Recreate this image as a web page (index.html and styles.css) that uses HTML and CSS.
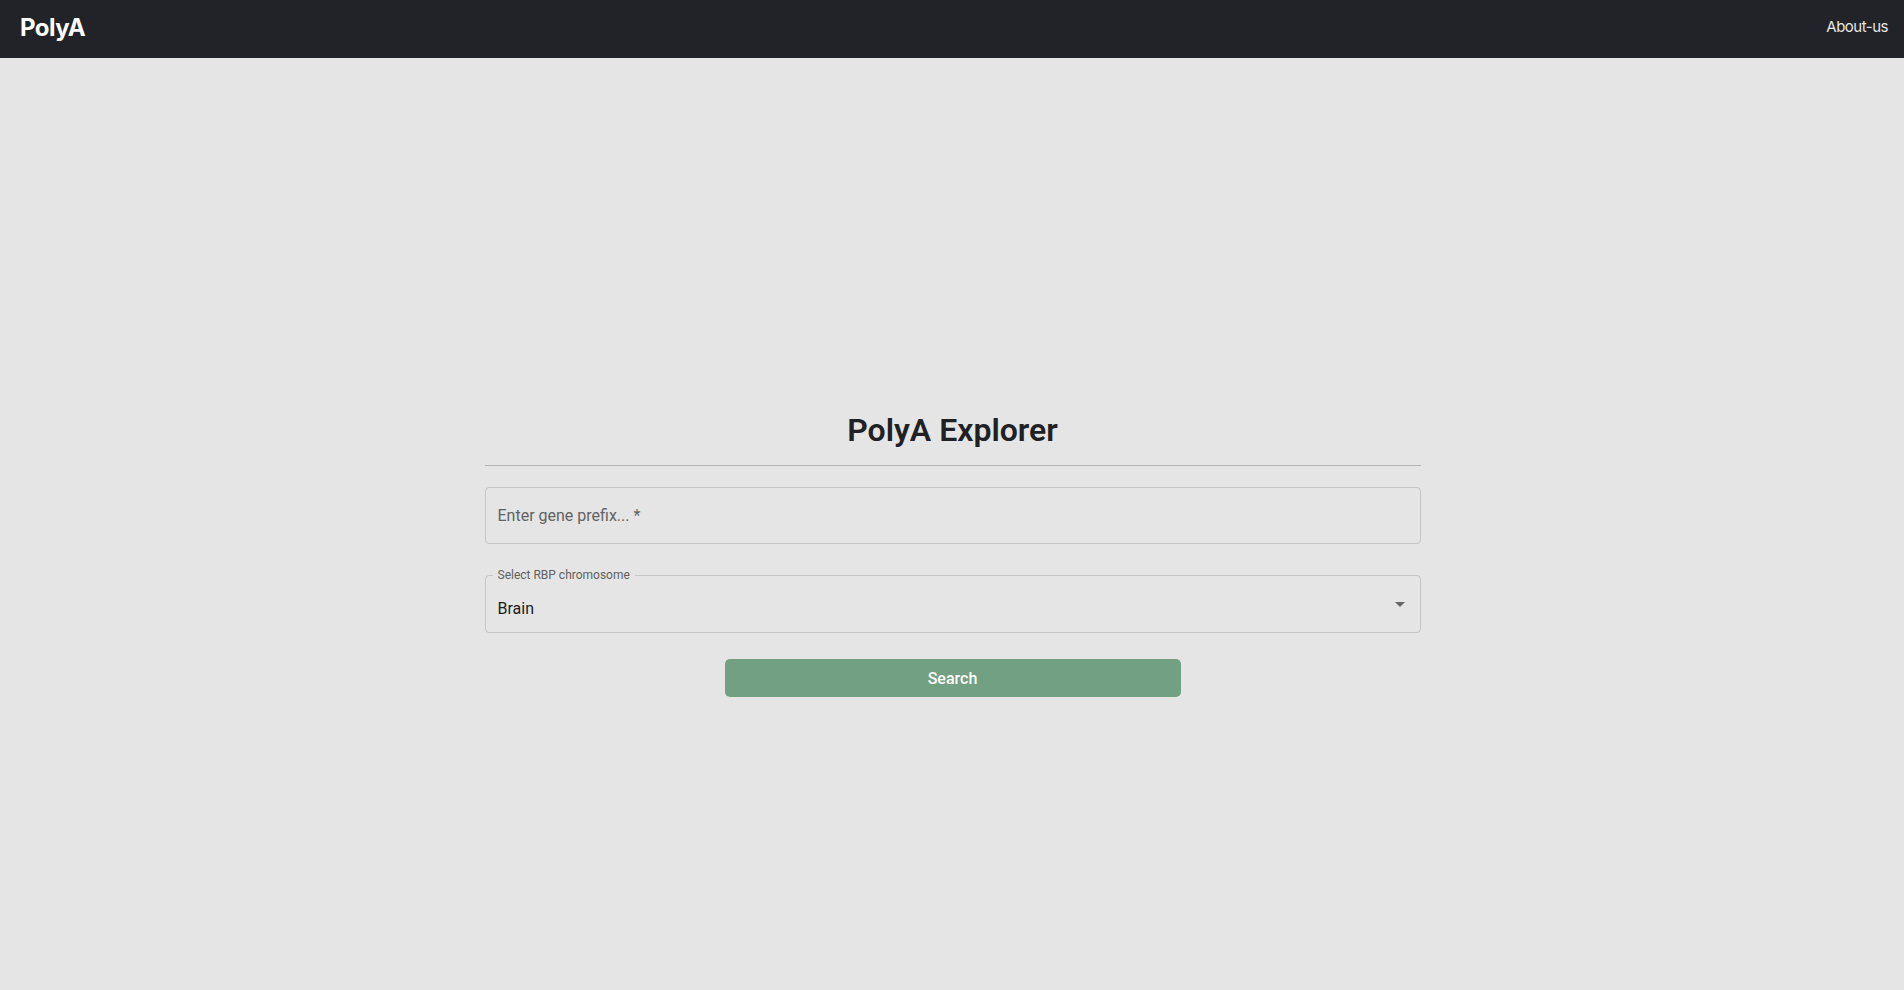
FILE: index.html
```html
<!DOCTYPE html>
<html lang="en">
<head>
<meta charset="utf-8">
<title>PolyA Explorer</title>
<link rel="stylesheet" href="styles.css">
</head>
<body>
<header class="navbar">
  <a class="brand" href="#">PolyA</a>
  <a class="nav-link" href="#">About-us</a>
</header>
<main class="main">
  <section class="explorer">
    <h1 class="title">PolyA Explorer</h1>
    <hr class="divider">
    <div class="field">
      <input class="field-input" type="text" placeholder="Enter gene prefix... *">
    </div>
    <div class="select">
      <span class="select-label">Select RBP chromosome</span>
      <span class="select-value">Brain</span>
      <svg class="select-arrow" viewBox="0 0 24 24" width="24" height="24" aria-hidden="true"><path d="M7 10l5 5 5-5z"/></svg>
    </div>
    <div class="actions">
      <button class="search-btn" type="button">Search</button>
    </div>
  </section>
</main>
</body>
</html>
```
FILE: styles.css
```css
* { box-sizing: border-box; }
html, body { margin: 0; padding: 0; }
body {
  background: #e5e5e5;
  font-family: Roboto, "Liberation Sans", sans-serif;
  min-height: 100vh;
}
.navbar {
  height: 58px;
  background: #212328;
  display: flex;
  align-items: center;
  justify-content: space-between;
  padding: 0 16px 0 20px;
}
.brand {
  color: #ffffff;
  font-family: Inter, "Liberation Sans", sans-serif;
  font-weight: 700;
  font-size: 24px;
  letter-spacing: -0.5px;
  text-decoration: none;
  line-height: 1;
  margin-bottom: 2px;
}
.nav-link {
  color: #e6e6e6;
  font-family: Inter, "Liberation Sans", sans-serif;
  font-size: 15px;
  letter-spacing: -0.5px;
  text-decoration: none;
  line-height: 1;
  margin-bottom: 5px;
}
.main {
  padding-top: 352px;
}
.explorer {
  width: 937px;
  margin: 0 auto;
  padding-left: 1px;
}
.title {
  margin: 0;
  text-align: center;
  font-size: 32px;
  line-height: 40px;
  font-weight: 600;
  color: #202124;
}
.divider {
  margin: 15px 0 0;
  border: 0;
  height: 1px;
  background: #b3b3b3;
}
.field {
  margin-top: 21px;
  height: 57px;
  border: 1px solid #c6c6c6;
  border-radius: 4px;
  display: flex;
  align-items: center;
}
.field-input {
  width: 100%;
  border: 0;
  background: transparent;
  outline: none;
  font-family: Roboto, sans-serif;
  font-size: 16px;
  padding: 0 12px;
  color: rgba(0,0,0,0.87);
}
.field-input::placeholder {
  color: #626262;
  opacity: 1;
}
.select {
  position: relative;
  margin-top: 31px;
  height: 58px;
  border: 1px solid #c6c6c6;
  border-radius: 4px;
  display: flex;
  align-items: center;
  padding: 8px 12px 0;
}
.select-label {
  position: absolute;
  left: 7px;
  top: -8px;
  padding: 0 5px;
  background: #e5e5e5;
  font-size: 12px;
  line-height: 14px;
  color: #5f5f5f;
}
.select-value {
  font-size: 16px;
  color: #1c1c1c;
}
.select-arrow {
  position: absolute;
  right: 8px;
  top: 50%;
  margin-top: -12px;
  fill: #666666;
}
.actions {
  display: flex;
  justify-content: center;
  margin-top: 26px;
}
.search-btn {
  width: 456px;
  height: 38px;
  border: 0;
  border-radius: 5px;
  background: #72a082;
  color: #ffffff;
  font-family: Roboto, sans-serif;
  font-size: 16px;
  font-weight: 500;
  cursor: pointer;
}
```
